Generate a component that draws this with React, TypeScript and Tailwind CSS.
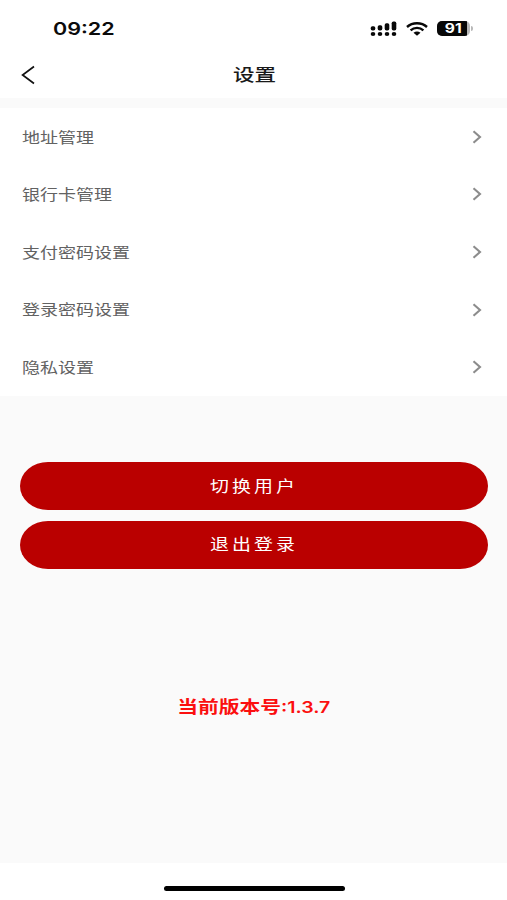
const menuItems = ["地址管理", "银行卡管理", "支付密码设置", "登录密码设置", "隐私设置"];

const actions = ["切换用户", "退出登录"];

export default function App() {
  return (
    <div className="flex h-[900px] w-[507px] flex-col overflow-hidden bg-[#fafafa] font-['Inter','Noto_Sans_CJK_SC',sans-serif]">
      <header className="h-[98px] shrink-0 bg-white">
        <StatusBar />
        <NavBar title="设置" />
      </header>

      <ul className="mt-[10px] h-[288px] shrink-0 bg-white">
        {menuItems.map((item) => (
          <MenuRow key={item} label={item} />
        ))}
      </ul>

      <div className="mt-[66px] flex flex-col gap-[10.5px] pr-[19px] pl-5">
        {actions.map((action) => (
          <ActionButton key={action} label={action} />
        ))}
      </div>

      <p className="mt-[125px] flex h-7 items-center justify-center text-[17px] font-bold whitespace-nowrap text-[#fb0f0f]">
        <span className="scale-x-[1.22]">
          当前版本号<span className="text-[16px] font-semibold">:1.3.7</span>
        </span>
      </p>

      <footer className="mt-auto flex h-[37px] shrink-0 justify-center bg-white pt-[23px] pl-px">
        <div className="h-[5px] w-[181px] rounded-full bg-black" />
      </footer>
    </div>
  );
}

function StatusBar() {
  return (
    <div className="flex h-[52px] items-center justify-between pt-[5px] pr-[34px] pl-[53px]">
      <span className="origin-left scale-x-[1.23] pt-[2px] text-[17.5px] font-semibold text-[#0b0b0b]">09:22</span>
      <div className="flex items-center gap-[9px]">
        <SignalIcon />
        <WifiIcon />
        <Battery level={91} />
      </div>
    </div>
  );
}

function NavBar({ title }: { title: string }) {
  return (
    <div className="grid h-[46px] grid-cols-[60px_1fr_60px] items-center">
      <svg className="ml-[21px] h-5 w-[15px]" viewBox="0 0 15 20" fill="none" stroke="#111" strokeWidth="1.7">
        <path d="M13 1.5 1.6 10 13 18.5" />
      </svg>
      <h1 className="pl-px text-center text-[17.5px] font-medium text-[#1a1a1a]">
        <span className="inline-block scale-x-[1.23]">{title}</span>
      </h1>
    </div>
  );
}

function MenuRow({ label }: { label: string }) {
  return (
    <li className="flex h-[57.6px] items-center justify-between pr-[25px] pl-[22px]">
      <span className="origin-left scale-x-[1.2] pt-[2px] text-[15px] text-[#626262]">{label}</span>
      <svg className="h-[14px] w-[10px]" viewBox="0 0 10 14" fill="none" stroke="#8c8c8c" strokeWidth="2.1">
        <path d="M1.5 1.2 8 7 1.5 12.8" />
      </svg>
    </li>
  );
}

function ActionButton({ label }: { label: string }) {
  return (
    <button
      type="button"
      className="flex h-12 items-center justify-center rounded-[28px/24px] bg-[#ba0000] text-[15.5px] tracking-[2.5px] text-white"
    >
      <span className="scale-x-[1.22] pt-px">{label}</span>
    </button>
  );
}

function SignalIcon() {
  return (
    <svg className="h-4 w-[27px]" viewBox="0 0 27 16" fill="#080808">
      <rect x="0.7" y="5.2" width="4.6" height="4.3" rx="1.7" />
      <rect x="7.7" y="4.2" width="4.6" height="5.3" rx="1.7" />
      <rect x="14.7" y="2.2" width="4.6" height="7.3" rx="1.7" />
      <rect x="21.7" y="0.6" width="4.600" height="8.9" rx="1.7" />
      <ellipse cx="3" cy="13.1" rx="2.300" ry="2" />
      <ellipse cx="10" cy="13.1" rx="2.300" ry="2" />
      <ellipse cx="17" cy="13.1" rx="2.300" ry="2" />
      <ellipse cx="24" cy="13.1" rx="2.300" ry="2" />
    </svg>
  );
}

function WifiIcon() {
  return (
    <svg className="h-[14px] w-[22px]" viewBox="0 0 22 14" fill="none" stroke="#080808" strokeWidth="2.4">
      <path d="M1 5C6.5 0 15.500 0 21 5" />
      <path d="M4.600 8.300C8.200 5 13.800 5 17.400 8.300" />
      <path d="M7.500 10.700Q11 8.200 14.500 10.700L11 13.700Z" fill="#080808" stroke="none" />
    </svg>
  );
}

function Battery({ level }: { level: number }) {
  return (
    <div className="flex items-center gap-px">
      <div className="flex h-[15px] w-[33px] overflow-hidden rounded-[5px] bg-[#b8b8b8]">
        <div
          className="flex h-full items-center justify-center bg-[#080808] text-[13px] font-bold text-white"
          style={{ width: `${level}%` }}
        >
          <span className="scale-x-[1.2] pl-[2px]">{level}</span>
        </div>
      </div>
      <div className="h-[5px] w-[2px] rounded-r-full bg-[#b8b8b8]" />
    </div>
  );
}
